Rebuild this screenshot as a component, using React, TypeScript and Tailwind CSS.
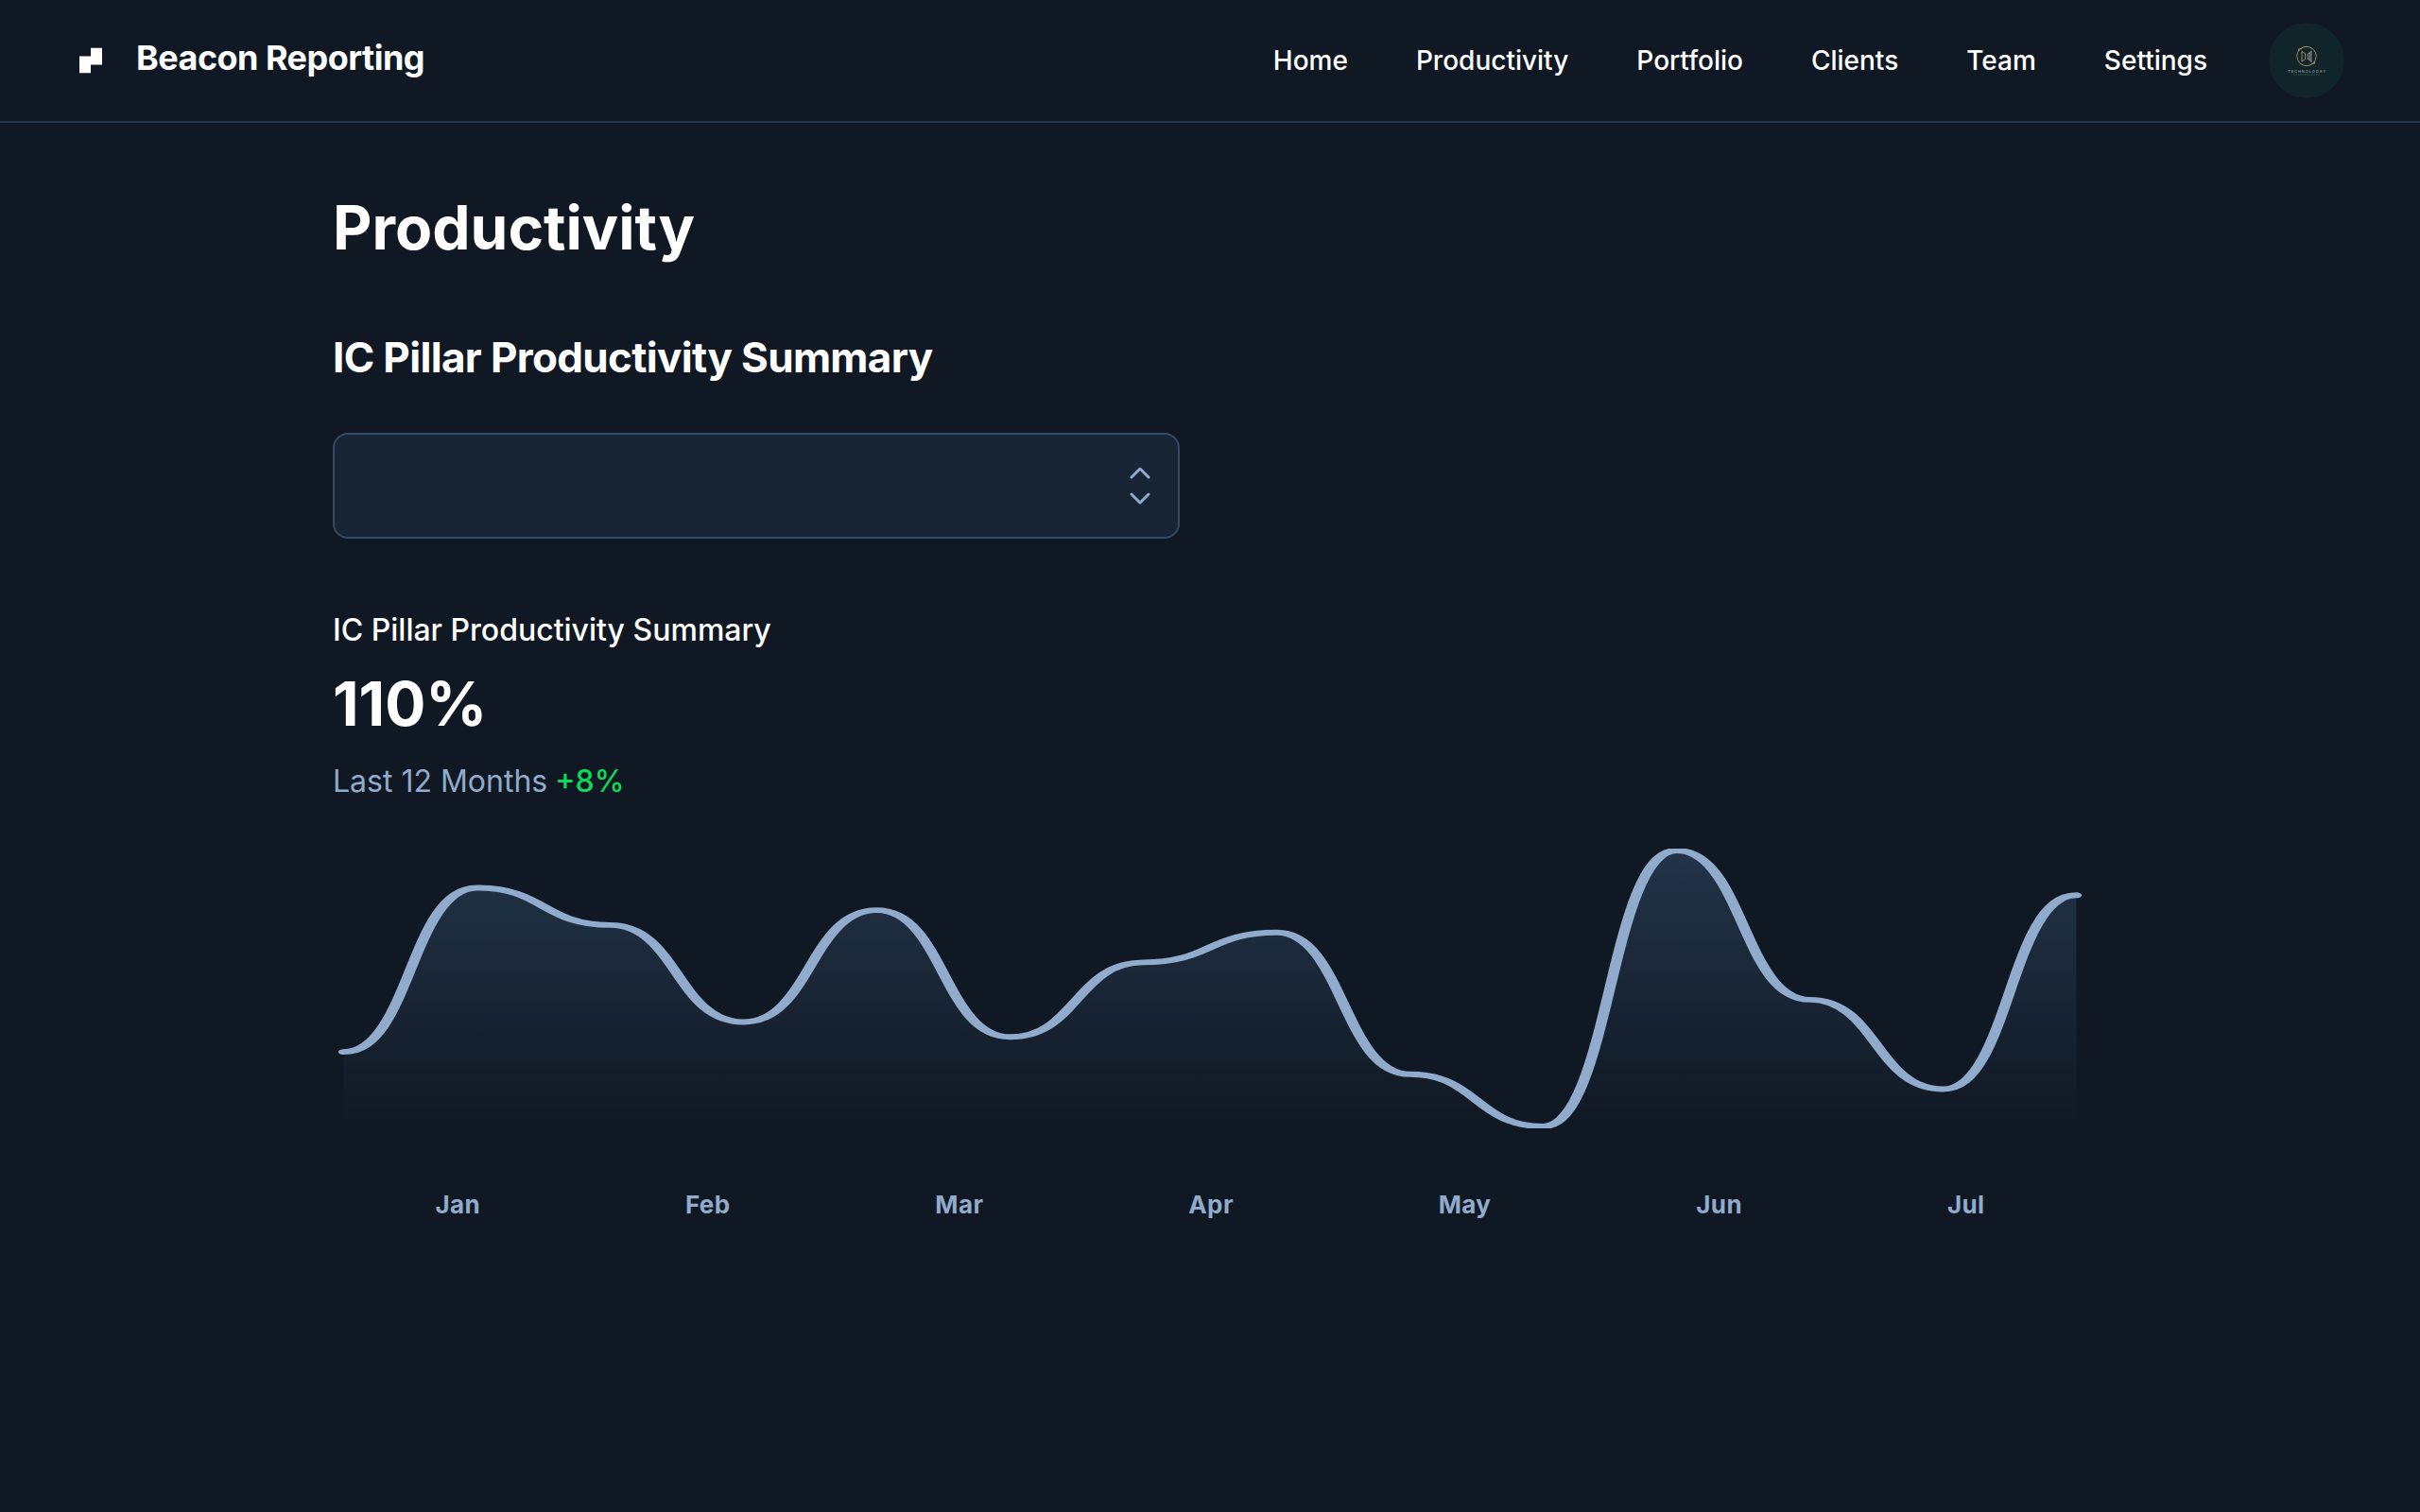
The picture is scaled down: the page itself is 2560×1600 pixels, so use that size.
const navItems = ["Home", "Productivity", "Portfolio", "Clients", "Team", "Settings"];
const months = ["Jan", "Feb", "Mar", "Apr", "May", "Jun", "Jul"];

const line =
  "M0 109C18.1538 109 18.1538 21 36.3077 21C54.4615 21 54.4615 41 72.6154 41C90.7692 41 90.7692 93 108.923 93C127.077 93 127.077 33 145.231 33C163.385 33 163.385 101 181.538 101C199.692 101 199.692 61 217.846 61C236 61 236 45 254.154 45C272.308 45 272.308 121 290.462 121C308.615 121 308.615 149 326.769 149C344.923 149 344.923 1 363.077 1C381.231 1 381.231 81 399.385 81C417.538 81 417.538 129 435.692 129C453.846 129 453.846 25 472 25";

function Logo() {
  return (
    <svg className="size-8" viewBox="0 0 48 48" fill="none">
      <path d="M24 4H42V17.3333V30.6667H24V44H6V30.6667V17.3333H24V4Z" fill="currentColor" />
    </svg>
  );
}

function Avatar() {
  return (
    <div className="size-20 shrink-0 overflow-hidden rounded-full bg-[#10242a]">
      <svg className="size-20" viewBox="0 0 80 80" fill="none">
        <g stroke="#a58c66">
          <circle cx="40" cy="35.5" r="10.2" strokeWidth="1" />
          <path d="M31.5 30V27.8H35M48.5 41V43.4H45" strokeWidth="0.9" />
          <path d="M35 30.5V41L38.8 38.5V33L35 30.5" strokeWidth="1" />
        </g>
        <path d="M41.5 33V38.5L45 41V30.5L41.5 33M43.4 32V40" stroke="#7c8076" strokeWidth="1.2" />
        <text x="20.2" y="52.8" fill="#81908e" fontFamily="Inter, sans-serif" fontSize="4.1" fontWeight="600" textLength="40" lengthAdjust="spacing">
          TECHNOLOOSY
        </text>
        <path d="M26 55H54" stroke="#3f5557" strokeWidth="1" strokeDasharray="1.6 0.8" />
      </svg>
    </div>
  );
}

function CaretUpDown() {
  return (
    <svg className="size-12" viewBox="0 0 256 256" fill="#90abcb">
      <path d="M181.66,170.34a8,8,0,0,1,0,11.32l-48,48a8,8,0,0,1-11.32,0l-48-48a8,8,0,0,1,11.32-11.32L128,212.69l42.34-42.35A8,8,0,0,1,181.66,170.34Zm-96-84.68L128,43.31l42.34,42.35a8,8,0,0,0,11.32-11.32l-48-48a8,8,0,0,0-11.32,0l-48,48A8,8,0,0,0,85.66,85.66Z" />
    </svg>
  );
}

function Chart() {
  return (
    <svg className="h-[296px] w-full" viewBox="-3 0 478 150" fill="none" preserveAspectRatio="none">
      <path d={`${line}V149H0V109Z`} fill="url(#area)" />
      <path d={line} stroke="#90abcb" strokeWidth="3" strokeLinecap="round" />
      <defs>
        <linearGradient id="area" x1="236" y1="1" x2="236" y2="149" gradientUnits="userSpaceOnUse">
          <stop stopColor="#223449" />
          <stop offset="1" stopColor="#223449" stopOpacity="0" />
        </linearGradient>
      </defs>
    </svg>
  );
}

export default function App() {
  return (
    <div className="flex min-h-screen flex-col bg-[#101823] font-['Inter','Noto_Sans',sans-serif] text-white">
      <header className="flex items-center justify-between border-b-2 border-[#223449] px-20 py-6">
        <div className="flex items-center gap-8">
          <Logo />
          <h2 className="pb-1.5 text-[36px] leading-tight font-bold tracking-[-0.015em]">Beacon Reporting</h2>
        </div>
        <div className="flex items-center gap-[65px]">
          <nav className="flex items-center gap-[72px]">
            {navItems.map((item) => (
              <a key={item} className="text-[28px] leading-normal font-medium">
                {item}
              </a>
            ))}
          </nav>
          <Avatar />
        </div>
      </header>
      <main className="flex flex-1 justify-center px-80 py-10">
        <div className="flex w-full max-w-[1920px] flex-col">
          <div className="px-8 pt-[31px] pb-[33px]">
            <h1 className="text-[64px] leading-tight font-bold">Productivity</h1>
          </div>
          <h2 className="px-8 pt-9 pb-7 text-[44px] leading-[56px] font-bold tracking-[-0.015em]">
            IC Pillar Productivity Summary
          </h2>
          <div className="w-[960px] px-8 py-6">
            <button
              aria-label="Select summary"
              className="flex h-28 w-full items-center justify-end rounded-2xl border-2 border-[#314b68] bg-[#182535] pr-4"
            >
              <CaretUpDown />
            </button>
          </div>
          <section className="flex flex-col px-8 pt-[49px] pb-12">
            <p className="text-[32px] leading-normal font-medium">IC Pillar Productivity Summary</p>
            <p className="mt-3.5 text-[64px] leading-tight font-bold">110%</p>
            <div className="mt-[18px] flex gap-2 text-[32px] leading-normal">
              <p className="text-[#90abcb]">Last 12 Months</p>
              <p className="font-medium text-[#0bda5b]">+8%</p>
            </div>
            <div className="mt-[15px] flex flex-col gap-[61px] py-8">
              <Chart />
              <div className="flex justify-around text-[26px] leading-normal font-bold tracking-[0.015em] text-[#90abcb]">
                {months.map((month) => (
                  <p key={month}>{month}</p>
                ))}
              </div>
            </div>
          </section>
        </div>
      </main>
    </div>
  );
}
